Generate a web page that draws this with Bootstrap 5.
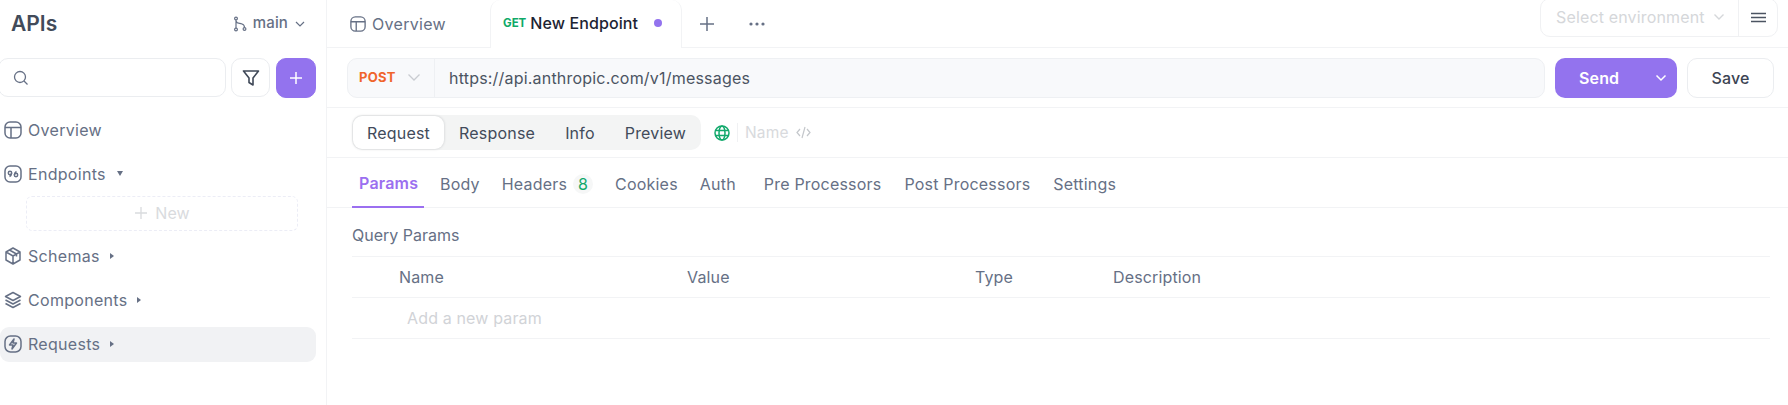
<!doctype html>
<html lang="en"><head><meta charset="utf-8"><title>APIs</title>
<link href="https://cdn.jsdelivr.net/npm/bootstrap@5.3.0/dist/css/bootstrap.min.css" rel="stylesheet">
<style>
html,body{height:405px;overflow:hidden}
body{font-family:Inter,"Liberation Sans",sans-serif;font-size:16px;letter-spacing:.15px;color:#667085;background:#fff}
svg{flex:none;display:block}
.shell{height:405px}
.side{width:327px;flex:none;border-right:1px solid #f2f3f5;padding-right:10px}
.side-head{height:47px;padding-left:11px;padding-right:10px}
.side-title{font-size:21px;font-weight:600;color:#424b5a;letter-spacing:0}
.branch{font-size:15px;font-weight:500;color:#667085;gap:6px;letter-spacing:.15px}
.tools{height:39px;margin:11px 0 0 -2px;gap:5px}
.search-box{width:228px;border:1px solid #ebedf0;border-radius:10px;padding-left:14px}
.square{width:39px;height:39px;border:1px solid #ebedf0;border-radius:10px}
.square-on{background:#9373ee;border-color:#9373ee;width:40px;height:40px;margin-left:1px}
.tree{margin-top:16px}
.tree-item{height:35px;margin-bottom:9px;padding:0 0 2px 4px;gap:6px;border-radius:9px;letter-spacing:.3px;color:#667085}
.tree-on{background:#f1f2f4}
.caret{width:0;height:0;border-left:4px solid #667085;border-top:3px solid transparent;border-bottom:3px solid transparent;margin-left:4px}
.caret-down{border-top:5px solid #667085;border-bottom:0;border-left:3px solid transparent;border-right:3px solid transparent;margin-left:5px}
.new-box{height:35px;margin:-5px 18px 8px 26px;padding-bottom:2px;border:1px dashed #ecedf6;border-radius:6px;color:#d9dbde;gap:7px}
.main{min-width:0}
.tabbar{height:48px;border-bottom:1px solid #f2f3f5;padding-right:10px}
.tab-plain{width:163px;padding-left:23px;gap:6px;height:47px;color:#667085;letter-spacing:.3px}
.tab-live{width:192px;height:48px;border:1px solid #f2f3f5;border-bottom:0;border-top:0;border-radius:10px 10px 0 0;padding:0 0 2px 12px;color:#1d2433;font-weight:500;background:#fff;margin-bottom:-1px;letter-spacing:.1px}
.verb-get{font-size:11.500px;font-weight:700;color:#0fa968;margin-right:4px;padding-top:2px;letter-spacing:0}
.dot{width:8px;height:8px;border-radius:50%;background:#9373ee;margin-left:16px}
.env{width:238px;height:39px;border:1px solid #f0f1f3;border-radius:10px;margin-top:-2px;color:#d5d7da}
.env-pick{flex:1;padding:0 0 2px 15px;gap:8px}
.env-menu{width:39px;height:100%;border-left:1px solid #f0f1f3}
.urlbar{height:60px;border-bottom:1px solid #f2f3f5;padding:0 14px 0 20px;gap:10px}
.url-box{height:40px;flex:1;background:#f8f9fb;border:1px solid #eef0f3;border-radius:10px}
.method{width:87px;height:100%;border-right:1px solid #eef0f3;padding-left:11px;gap:11px;color:#f0642c;font-size:13px;font-weight:700;letter-spacing:.3px}
.url-text{padding-left:14px;color:#4b5462;letter-spacing:.2px;padding-top:1px}
.send{width:122px;height:40px;background:#9373ee;border-radius:10px;color:#fff;font-weight:600;padding:0 10px 0 24px}
.send-label{flex:1;padding-left:0}
.save{width:87px;height:40px;border:1px solid #ebedf0;border-radius:10px;color:#3c4453;font-weight:500}
.modebar{height:50px;border-bottom:1px solid #f2f3f5;padding-left:25px}
.seg{height:35px;width:349px;background:#f3f4f4;border-radius:10px;padding:1px;color:#424b5a;letter-spacing:.2px}
.seg-btn{height:33px;padding:0 14px}
.seg-on{background:#fff;border-radius:9px;box-shadow:0 0 3px rgba(16,24,40,.18)}
.seg-gap{padding:0 15px}
.meta{margin-left:13px;color:#d8dadd;gap:7px;font-size:15.500px}
.meta-sep{width:1px;height:19px;background:#f0f1f3}
.subtabs{height:50px;border-bottom:1px solid #f2f3f5;padding-left:25px;letter-spacing:.2px}
.subtab{height:50px;padding:0 7px;color:#667085;padding-top:2px}
.subtab-on{color:#9b6ff0;font-weight:600;border-bottom:2px solid #9b6ff0;height:50px;margin-bottom:-1px}
.num{width:20px;height:20px;border-radius:50%;background:#f6f7f7;color:#12a96c;margin-left:6px}
.pane{padding:0 18px 0 25px}
.pane-title{height:49px;color:#667085;border-bottom:1px solid #f2f3f5;padding-top:6px;letter-spacing:0}
.grid-row{display:grid;grid-template-columns:47px 288px 288px 138px 1fr;height:41px;border-bottom:1px solid #f2f3f5;align-items:center}
.ph{color:#d1d3d7;padding-left:8px}
</style></head>
<body>
<div class="d-flex shell">
<aside class="side">
  <div class="side-head d-flex align-items-center justify-content-between">
    <span class="side-title">APIs</span>
    <span class="branch d-flex align-items-center">
      <svg width="14" height="16" viewBox="0 0 14 16" fill="none" stroke="#667085" stroke-width="1.2"><circle cx="3" cy="2.5" r="1.4"/><circle cx="3" cy="13.5" r="1.4"/><circle cx="11.5" cy="13" r="1.4"/><path d="M3 4v8M3 5c1 3 3 2 6 3 1.500.5 2.500 1.500 2.500 3.500"/></svg>
      <span>main</span>
      <svg width="12" height="8" viewBox="0 0 12 8" fill="none" stroke="#667085" stroke-width="1.2"><path d="M2 2l4 4 4-4"/></svg>
    </span>
  </div>
  <div class="tools d-flex">
    <div class="search-box d-flex align-items-center"><svg width="16" height="16" viewBox="0 0 16 16" fill="none" stroke="#667085" stroke-width="1.3"><circle cx="7" cy="7" r="5.500"/><path d="M11 11l3.500 3.500"/></svg></div>
    <div class="square d-flex align-items-center justify-content-center"><svg width="18" height="18" viewBox="0 0 18 18" fill="none" stroke="#3f4857" stroke-width="1.600" stroke-linejoin="round"><path d="M1.500 2h15l-5.500 7v7l-4-2.500V9z"/></svg></div>
    <div class="square square-on d-flex align-items-center justify-content-center"><svg width="14" height="14" viewBox="0 0 14 14" stroke="#fff" stroke-width="1.500"><path d="M7 1v12M1 7h12"/></svg></div>
  </div>
  <nav class="tree">
    <div class="tree-item d-flex align-items-center"><svg width="18" height="18" viewBox="0 0 18 18" fill="none" stroke="#667085" stroke-width="1.500"><rect x="1" y="1" width="16" height="16" rx="5"/><path d="M1 6.500h16M7 6.500V17"/></svg><span>Overview</span></div>
    <div class="tree-item d-flex align-items-center"><svg width="18" height="18" viewBox="0 0 18 18" fill="none" stroke="#667085" stroke-width="1.500"><rect x="1" y="1" width="16" height="16" rx="5"/><circle cx="6" cy="8" r="1.700"/><path d="M7.500 8c0 2-1 3-2 3.500"/><circle cx="12" cy="10" r="1.700"/><path d="M10.500 10c0-2 1-3 2-3.500"/></svg><span>Endpoints</span><i class="caret caret-down"></i></div>
    <div class="new-box d-flex align-items-center justify-content-center"><svg width="14" height="14" viewBox="0 0 14 14" stroke="#d9dbde" stroke-width="1.300"><path d="M7 1v12M1 7h12"/></svg><span>New</span></div>
    <div class="tree-item d-flex align-items-center"><svg width="18" height="18" viewBox="0 0 18 18" fill="none" stroke="#667085" stroke-width="1.500" stroke-linejoin="round"><path d="M9 1l7 4v8l-7 4-7-4V5zM2 5l7 4 7-4M9 9v8M5.500 3l7 4v2.500"/></svg><span>Schemas</span><i class="caret"></i></div>
    <div class="tree-item d-flex align-items-center"><svg width="18" height="18" viewBox="0 0 18 18" fill="none" stroke="#667085" stroke-width="1.500" stroke-linejoin="round"><path d="M9 1.500l7.500 4L9 9.500l-7.500-4zM1.500 9L9 13l7.500-4M1.500 12.500L9 16.500l7.500-4"/></svg><span>Components</span><i class="caret"></i></div>
    <div class="tree-item tree-on d-flex align-items-center"><svg width="18" height="18" viewBox="0 0 18 18" fill="none" stroke="#667085" stroke-width="1.500" stroke-linejoin="round"><rect x="1" y="1" width="16" height="16" rx="5.500"/><path d="M10 4L5.500 10H9l-1 4 4.500-6H9z"/></svg><span>Requests</span><i class="caret"></i></div>
  </nav>
</aside>
<main class="main flex-grow-1">
  <div class="tabbar d-flex">
    <div class="tab-plain d-flex align-items-center"><svg width="16" height="16" viewBox="0 0 18 18" fill="none" stroke="#667085" stroke-width="1.500"><rect x="1" y="1" width="16" height="16" rx="5"/><path d="M1 6.500h16M7 6.500V17"/></svg><span>Overview</span></div>
    <div class="tab-live d-flex align-items-center"><span class="verb-get">GET</span><span>New Endpoint</span><i class="dot"></i></div>
    <div class="d-flex align-items-center" style="gap:34px;padding-left:17px"><svg width="16" height="16" viewBox="0 0 16 16" stroke="#667085" stroke-width="1.500"><path d="M8 1v14M1 8h14"/></svg><svg width="16" height="4" viewBox="0 0 16 4" fill="#667085"><circle cx="2" cy="2" r="1.600"/><circle cx="8" cy="2" r="1.600"/><circle cx="14" cy="2" r="1.600"/></svg></div>
    <div class="env d-flex align-items-center ms-auto">
      <div class="env-pick d-flex align-items-center"><span>Select environment</span><svg width="12" height="8" viewBox="0 0 12 8" fill="none" stroke="#d5d7da" stroke-width="1.400"><path d="M1.500 1.500L6 6l4.500-4.500"/></svg></div>
      <div class="env-menu d-flex align-items-center justify-content-center"><svg width="15" height="11" viewBox="0 0 15 11" stroke="#4b5462" stroke-width="1.600"><path d="M0 1.500h15M0 5.500h15M0 9.500h15"/></svg></div>
    </div>
  </div>
  <div class="urlbar d-flex align-items-center">
    <div class="url-box d-flex align-items-center">
      <div class="method d-flex align-items-center"><span>POST</span><svg width="14" height="9" viewBox="0 0 14 9" fill="none" stroke="#c9ccd1" stroke-width="1.300"><path d="M1.500 1.500L7 7l5.500-5.500"/></svg></div>
      <div class="url-text">https://api.anthropic.com/v1/messages</div>
    </div>
    <div class="send d-flex align-items-center"><span class="send-label">Send</span><svg width="12" height="8" viewBox="0 0 12 8" fill="none" stroke="#fff" stroke-width="1.500"><path d="M1.500 1.500L6 6l4.500-4.500"/></svg></div>
    <div class="save d-flex align-items-center justify-content-center">Save</div>
  </div>
  <div class="modebar d-flex align-items-center">
    <div class="seg d-flex align-items-center"><div class="seg-btn seg-on d-flex align-items-center">Request</div><div class="seg-gap">Response</div><div class="seg-gap">Info</div><div class="seg-gap">Preview</div></div>
    <div class="meta d-flex align-items-center">
      <svg width="16" height="16" viewBox="0 0 16 16" fill="none" stroke="#12a96c" stroke-width="1.500"><circle cx="8" cy="8" r="7"/><ellipse cx="8" cy="8" rx="3" ry="7"/><path d="M1.500 5.500h13M1.500 10.500h13"/></svg>
      <i class="meta-sep"></i><span>Name</span>
      <svg width="15" height="13" viewBox="0 0 15 13" fill="none" stroke="#c4c7cb" stroke-width="1.200"><path d="M4 3L1 6.500 4 10M11 3l3 3.500L11 10M9 1L6 12"/></svg>
    </div>
  </div>
  <div class="subtabs d-flex align-items-center">
    <div class="subtab subtab-on d-flex align-items-center" style="width:72px">Params</div>
    <div class="subtab d-flex align-items-center" style="margin-left:9px">Body</div>
    <div class="subtab d-flex align-items-center" style="margin-left:8px">Headers<span class="num d-flex align-items-center justify-content-center">8</span></div>
    <div class="subtab d-flex align-items-center" style="margin-left:8px">Cookies</div>
    <div class="subtab d-flex align-items-center" style="margin-left:8px">Auth</div>
    <div class="subtab d-flex align-items-center" style="margin-left:14px">Pre Processors</div>
    <div class="subtab d-flex align-items-center" style="margin-left:9px">Post Processors</div>
    <div class="subtab d-flex align-items-center" style="margin-left:9px">Settings</div>
  </div>
  <section class="pane">
    <div class="pane-title d-flex align-items-center">Query Params</div>
    <div class="grid-row"><span></span><span>Name</span><span>Value</span><span>Type</span><span>Description</span></div>
    <div class="grid-row"><span></span><span class="ph">Add a new param</span><span></span><span></span><span></span></div>
  </section>
</main>
</div>
<script src="https://cdn.jsdelivr.net/npm/bootstrap@5.3.0/dist/js/bootstrap.bundle.min.js"></script>
</body></html>
